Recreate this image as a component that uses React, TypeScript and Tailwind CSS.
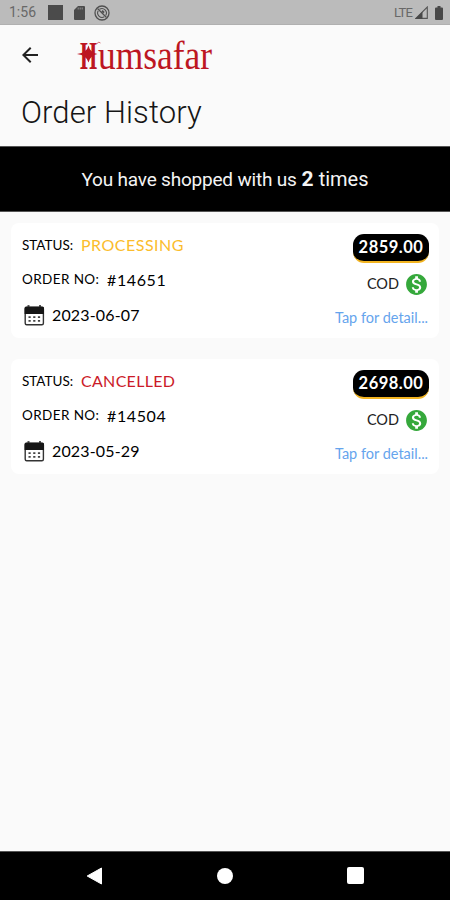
import React from "react";
import { MdArrowBack, MdMonetizationOn } from "react-icons/md";

interface Order {
  id: string;
  status: string;
  statusClass: string;
  date: string;
  total: string;
  payment: string;
}

const orders: Order[] = [
  {
    id: "14651",
    status: "PROCESSING",
    statusClass: "text-[#fbbc2c] tracking-[0.5px]",
    date: "2023-06-07",
    total: "2859.00",
    payment: "COD",
  },
  {
    id: "14504",
    status: "CANCELLED",
    statusClass: "text-[#cb1a28] tracking-[0.3px]",
    date: "2023-05-29",
    total: "2698.00",
    payment: "COD",
  },
];

const StatusBar: React.FC = () => (
  <div className="h-[25px] bg-[#bbbbbb] border-b border-[#b0b0b0] flex items-center pl-[9px] pr-[7px] font-['Roboto',sans-serif] text-[#686868]">
    <span className="text-[14px] w-[39px] pt-px">1:56</span>
    <span className="size-[15px] bg-[#4b4b4b] mt-px" />
    <svg className="ml-[11px] mt-px w-[11px] h-[14px]" viewBox="0 0 11 14">
      <path d="M4 0h6a1 1 0 0 1 1 1v12a1 1 0 0 1-1 1H1a1 1 0 0 1-1-1V4z" fill="#4b4b4b" />
      <path d="M4.200 1.500v2M6.200 1.500v2M8.200 1.500v2" stroke="#999" strokeWidth="0.9" />
    </svg>
    <svg className="ml-[9px] mt-px size-[16px]" viewBox="0 0 16 16" fill="none" stroke="#505050">
      <circle cx="8" cy="8" r="7" strokeWidth="1.3" />
      <path d="M5.500 4.300A4.500 4.500 0 0 1 11.700 10.500M10.300 11.800A4.500 4.500 0 0 1 4.200 5.700" strokeWidth="1.100" />
      <path d="M3.500 3.500l9 9" strokeWidth="1.300" />
      <path d="M8 5.800l2 2" strokeWidth="2" />
    </svg>
    <span className="ml-auto text-[13px] tracking-[-0.8px] pt-px">LTE</span>
    <svg className="ml-[3px] mt-px w-[13px] h-[13px]" viewBox="0 0 13 13">
      <path d="M12.300 1v11.400H.9z" fill="none" stroke="#555" strokeWidth="1.1" />
      <path d="M7.500 5.600V13H0z" fill="#484848" />
    </svg>
    <svg className="ml-[7px] mt-px w-[8px] h-[14px]" viewBox="0 0 8 14">
      <path d="M2.500 0h3v1.500H7a1 1 0 0 1 1 1V13a1 1 0 0 1-1 1H1a1 1 0 0 1-1-1V2.500a1 1 0 0 1 1-1h1.500z" fill="#484848" />
    </svg>
  </div>
);

const Logo: React.FC = () => (
  <svg className="w-[150px] h-[60px] overflow-visible" viewBox="0 0 150 60" fill="#bd1622">
    <g fontFamily="'Liberation Serif', serif" fontSize="40">
      <text transform="translate(4 44) scale(0.55 1)" fontWeight="bold">H</text>
      <text transform="translate(22 44) scale(0.885 1)">umsafar</text>
    </g>
    <path d="M12.500 20.500q1.500 7 9 8.500-7.500 1.500-9 8.500-1.500-7-11.500-8.500 10-1.500 11.500-8.500z" />
    <path d="M21 18.500q2-2.500 3.500-.5" fill="none" stroke="#bd1622" strokeWidth="0.6" />
  </svg>
);

const CalendarIcon: React.FC = () => (
  <svg className="mt-px size-6" viewBox="0 0 24 24" fill="#161616">
    <path d="M5.500 2h2v4h-2zM17 2h2v4h-2z" fill="#555555" />
    <rect x="3.200" y="4.300" width="18.200" height="17.400" rx="1.500" fill="white" stroke="#333333" strokeWidth="1.400" />
    <path d="M4 3.800h16.600q1.400 0 1.400 1.400V11H2.600V5.200q0-1.400 1.400-1.400z" />
    <path d="M6.500 13.300h2.200v1.700H6.500zM11.200 13.300h2.200v1.700h-2.200zM15.900 13.300h2.200v1.700h-2.200zM6.500 17h2.200v1.700H6.500zM11.200 17h2.200v1.700h-2.200zM15.900 17h2.200v1.700h-2.200z" fill="#444444" />
  </svg>
);

const OrderCard: React.FC<{ order: Order }> = ({ order }) => (
  <div className="h-[115px] bg-white rounded-lg pl-[11px] pr-[10px] flex justify-between whitespace-nowrap">
    <div className="pt-[5px] text-black">
      <div className="h-[34px] flex items-center">
        <span className="w-[59px] pt-px text-[13.5px]">STATUS:</span>
        <span className={`text-[16px] ${order.statusClass}`}>{order.status}</span>
      </div>
      <div className="h-[35px] flex items-center">
        <span className="w-[85px] text-[13.5px] tracking-[0.4px]">ORDER NO:</span>
        <span className="text-[16px] tracking-[0.6px]">#{order.id}</span>
      </div>
      <div className="h-[35px] flex items-center">
        <CalendarIcon />
        <span className="ml-[6px] text-[16px] tracking-[0.15px]">{order.date}</span>
      </div>
    </div>

    <div className="pt-[11px] flex flex-col items-end">
      <div className="w-[76px] h-[29px] rounded-[11px] bg-black border-b-2 border-[#f2b421] flex items-center justify-center text-white text-[16.5px] font-bold tracking-[0.5px]">
        {order.total}
      </div>
      <div className="mt-[9px] h-6 flex items-center">
        <span className="text-[14.5px] text-[#222222]">{order.payment}</span>
        <MdMonetizationOn className="ml-[5px] size-[25px] text-[#35a83b]" />
      </div>
      <button className="mt-[10px] mr-px h-6 text-[14.5px] text-[#65a4ed]">
        Tap for detail...
      </button>
    </div>
  </div>
);

const NavBar: React.FC = () => (
  <div className="h-[49px] bg-black border-t border-[#555555] flex items-center justify-between px-[86px] pb-px">
    <svg className="w-[17px] h-[18px]" viewBox="0 0 17 18">
      <path d="M1.200 9L15.500 1v16z" fill="white" stroke="white" strokeLinejoin="round" />
    </svg>
    <span className="size-[16px] rounded-full bg-white" />
    <span className="size-[17px] rounded-[2px] bg-white" />
  </div>
);

const App: React.FC = () => {
  return (
    <div className="w-[450px] h-[900px] flex flex-col overflow-hidden bg-[#fafafa] font-['Lato',sans-serif]">
      <StatusBar />

      <header className="h-[60px] pl-[18px] flex items-center">
        <button>
          <MdArrowBack className="size-6 text-[#222222]" />
        </button>
        <div className="ml-[34px]">
          <Logo />
        </div>
      </header>

      <h1 className="h-[61px] pl-[21px] pt-[8px] font-['Roboto',sans-serif] font-light text-[31px] leading-[40px] tracking-[0.1px] text-[#151515]">
        Order History
      </h1>

      <div className="h-[66px] bg-black border-y border-[#555555] pt-[3px] flex items-baseline justify-center gap-[5px] text-[#f4f4f4] font-['Roboto',sans-serif] text-[19px] leading-[58px]">
        <span className="tracking-[-0.2px]">You have shopped with us</span>
        <b className="text-[21px]">2</b>
        <span className="text-[20px]">times</span>
      </div>

      <main className="flex-1 pt-[11px] px-[11px] flex flex-col gap-[21px]">
        {orders.map((order) => (
          <OrderCard key={order.id} order={order} />
        ))}
      </main>

      <NavBar />
    </div>
  );
};

export default App;
